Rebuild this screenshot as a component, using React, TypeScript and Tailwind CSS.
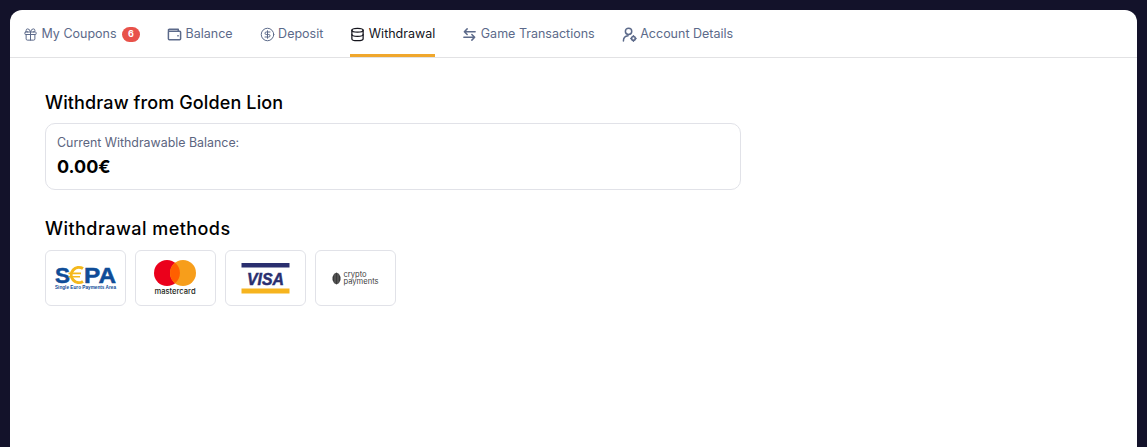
import React from 'react';
import { Gift, CircleDollarSign, Database } from 'lucide-react';

type IconProps = { size?: number; strokeWidth?: number };

const WalletIcon = ({ size = 15, strokeWidth = 1.6 }: IconProps) => (
  <svg width={size} height={size} viewBox="0 0 16 16" fill="none" stroke="currentColor" strokeWidth={strokeWidth} strokeLinejoin="round">
    <path d="M1.5 4.5v8a1 1 0 0 0 1 1h11a1 1 0 0 0 1-1v-7a1 1 0 0 0-1-1H2.5a1 1 0 0 1-1-1a1 1 0 0 1 1-1h9.5v2" />
    <path d="M11 9.2h1.5" />
  </svg>
);

const SwapIcon = ({ size = 15, strokeWidth = 1.6 }: IconProps) => (
  <svg width={size} height={size} viewBox="0 0 16 16" fill="none" stroke="currentColor" strokeWidth={strokeWidth} strokeLinecap="round" strokeLinejoin="round">
    <path d="M14 5H2.5M5.5 2L2.5 5l3 3" />
    <path d="M2 11h11.5M10.5 8l3 3l-3 3" />
  </svg>
);

const AccountIcon = ({ size = 15, strokeWidth = 1.6 }: IconProps) => (
  <svg width={size} height={size} viewBox="0 0 16 16" fill="none" stroke="currentColor" strokeWidth={strokeWidth} strokeLinecap="round">
    <circle cx="7" cy="4.6" r="3.4" />
    <path d="M1.5 15c0-3 2-5.4 5-5.6" />
    <circle cx="12.2" cy="12.2" r="2" />
    <path d="M12.2 9.2v.8M12.2 14.4v.8M9.4 12.2h.8M14.2 12.2h.8" />
  </svg>
);

const tabs = [
  { label: 'My Coupons', icon: Gift, badge: '6' },
  { label: 'Balance', icon: WalletIcon },
  { label: 'Deposit', icon: CircleDollarSign },
  { label: 'Withdrawal', icon: Database, active: true },
  { label: 'Game Transactions', icon: SwapIcon },
  { label: 'Account Details', icon: AccountIcon },
];

const SepaLogo = () => (
  <div className="flex w-[62px] flex-col items-center">
    <svg width="62" height="18" viewBox="0 0 62 18" className="overflow-visible">
      <text x="0" y="17" fontFamily="Liberation Sans, sans-serif" fontWeight="700" fontSize="22" fill="#0f4c97" stroke="#0f4c97" strokeWidth="0.5" textLength="15" lengthAdjust="spacingAndGlyphs">S</text>
      <path d="M28 2.6a7.6 7.6 0 1 0 0 12.8" fill="none" stroke="#f4b81c" strokeWidth="3" />
      <path d="M13.5 7.4h12.5M13.5 10.8h11.5" stroke="#f4b81c" strokeWidth="1.6" />
      <text x="29" y="17" fontFamily="Liberation Sans, sans-serif" fontWeight="700" fontSize="22" fill="#0f4c97" stroke="#0f4c97" strokeWidth="0.5" textLength="32" lengthAdjust="spacingAndGlyphs">PA</text>
    </svg>
    <span className="mt-[1px] text-[4.7px] leading-[6px] font-bold whitespace-nowrap text-[#0f4c97] font-['Liberation_Sans',sans-serif]">
      Single Euro Payments Area
    </span>
  </div>
);

const MastercardLogo = () => (
  <div className="flex flex-col items-center pr-[1px]">
    <svg width="42" height="26" viewBox="0 0 42 26">
      <circle cx="13" cy="13" r="13" fill="#eb001b" />
      <circle cx="29" cy="13" r="13" fill="#f79e1b" />
      <path d="M21 2.8a13 13 0 0 1 0 20.4a13 13 0 0 1 0-20.4z" fill="#ff5f00" />
    </svg>
    <span className="mt-[1px] text-[7.6px] leading-[9px] font-medium text-[#231f20]">mastercard</span>
  </div>
);

const VisaLogo = () => (
  <svg width="50" height="31" viewBox="0 0 50 31">
    <rect x="0.5" y="0" width="48" height="4.5" fill="#2a2f6f" />
    <rect x="0.5" y="25.5" width="48" height="5" fill="#f6b41e" />
    <text x="24.5" y="21.5" textAnchor="middle" fontFamily="Liberation Sans, sans-serif" fontWeight="700" fontStyle="italic" fontSize="17" fill="#2a2f6f" stroke="#2a2f6f" strokeWidth="0.5" textLength="37" lengthAdjust="spacingAndGlyphs">VISA</text>
  </svg>
);

const CryptoLogo = () => (
  <div className="flex items-center gap-[2px]">
    <svg width="9" height="13" viewBox="0 0 9 13">
      <path d="M4.5 0.5L7 2l1.5 3v3L7 11l-2.5 1.5L2 11L0.5 8V5L2 2z" fill="#3a3a3a" />
      <path d="M3 1.5v10M6 1.5v10" stroke="#8a8a8a" strokeWidth="0.6" />
    </svg>
    <span className="text-[7.6px] leading-[7px] text-[#3f3f3f]">
      crypto
      <br />
      payments
    </span>
  </div>
);

const methods = [SepaLogo, MastercardLogo, VisaLogo, CryptoLogo];

export default function App() {
  return (
    <div className="h-[447px] overflow-hidden bg-[#13122a] pt-[10px] px-[10px] font-['Inter',sans-serif]">
      <div className="h-[437px] rounded-t-xl bg-white">
        <nav className="flex h-[48px] gap-[27px] border-b border-[#e2e2e4] pl-[13px]">
          {tabs.map((tab) => {
            const Icon = tab.icon;
            return (
              <div
                key={tab.label}
                className={`flex h-[47px] items-center gap-[3.5px] border-b-[3px] pt-[4px] text-[12.5px] ${
                  tab.active ? 'border-[#f0a72c] text-[#14141c]' : 'border-transparent text-[#5c6a8a]'
                }`}
              >
                <Icon size={15} strokeWidth={tab.active ? 2 : 1.6} />
                <span>{tab.label}</span>
                {tab.badge && (
                  <span className="ml-[2px] flex h-[15px] w-[18px] items-center justify-center rounded-full bg-[#e8524a] text-[9px] font-bold text-white">
                    {tab.badge}
                  </span>
                )}
              </div>
            );
          })}
        </nav>
        <main className="pl-[35px] pt-[32px]">
          <h2 className="text-[18px] leading-[26px] font-medium tracking-[0.12px] text-black">Withdraw from Golden Lion</h2>
          <div className="mt-[7px] h-[67px] w-[696px] rounded-[10px] border border-[#e1e2e8] px-[11px] pt-[10px]">
            <div className="text-[12.4px] leading-[18px] text-[#5c6580]">Current Withdrawable Balance:</div>
            <div className="mt-[3px] text-[18px] leading-[24px] font-bold text-black">0.00€</div>
          </div>
          <h2 className="mt-[26px] text-[18px] leading-[26px] font-medium tracking-[0.45px] text-black">Withdrawal methods</h2>
          <div className="mt-[8px] flex gap-[9px]">
            {methods.map((Logo, i) => (
              <div key={i} className="flex h-[56px] w-[81px] items-center justify-center rounded-md border border-[#e1e2e8]">
                <Logo />
              </div>
            ))}
          </div>
        </main>
      </div>
    </div>
  );
}
